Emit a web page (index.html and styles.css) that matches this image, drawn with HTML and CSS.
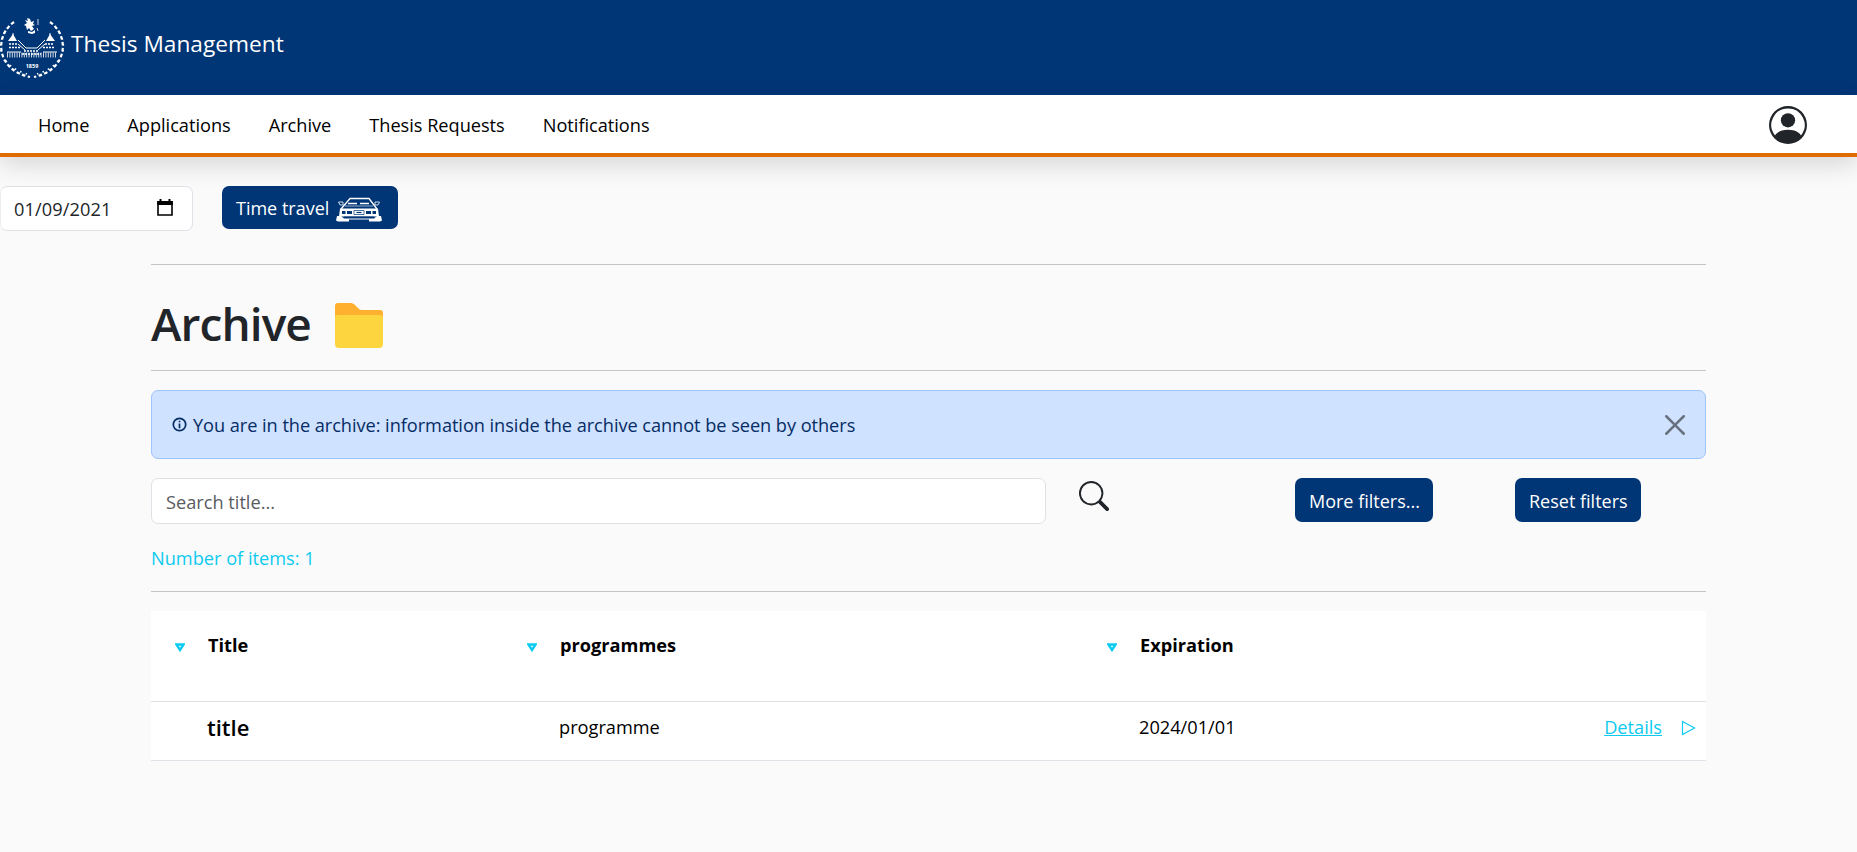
FILE: index.html
```html
<!DOCTYPE html>
<html lang="en">
<head>
<meta charset="utf-8">
<title>Thesis Management</title>
<link rel="stylesheet" href="styles.css">
</head>
<body>
<header class="brand">
  <svg class="logo" viewBox="0 0 66 66" fill="#fff" stroke="#fff">
    <g fill="none">
      <path d="M14 7C-6 21-4 55 30 62M50 7C70 21 68 55 34 62" stroke-width="2.200" stroke-dasharray="3.600 2.400"/>
      <path d="M11 10C-6 25-3 50 27 59M53 10C70 25 67 50 37 59" stroke-width="1.600" stroke-dasharray="1.600 4.400" stroke-dashoffset="2"/>
    </g>
    <path d="M25 5l3 1-1-3 3 1 1 3 3-1-1 3 2 1-3 1 2 3-3 2-2-3-2 2-1-4-2-1 3-2zM28 16l4 1 3-2v3l-3 1-4-1z" stroke="none"/>
    <path d="M38 4v6M37 13l1 3" stroke-width=".8"/>
    <path d="M13 18v3" stroke-width="1"/><path d="M50 18v3" stroke-width="1"/>
    <path d="M8 26l5-7 4 7zM46 26l4-7 5 7z" stroke="none"/>
    <path d="M18 25l8 8h11l8-8M18 29l7 6M45 29l-7 6" fill="none" stroke-width="1"/>
    <path d="M9 29h9M45 29h9M9 32.500h11M43 32.500h11M24 36h15M22 39h19" fill="none" stroke-width="1.400" stroke-dasharray="2 1"/>
    <path d="M7 40h50" stroke-width="5" stroke-dasharray="1 1.400" opacity=".8"/>
    <path d="M7 37h14M43 37h14" stroke-width="1"/>
    <text class="year" x="32" y="52.500" text-anchor="middle" stroke="none">1859</text>
  </svg>
  <span class="brand-name">Thesis Management</span>
</header>
<nav class="nav">
  <a>Home</a><a>Applications</a><a>Archive</a><a>Thesis Requests</a><a>Notifications</a>
  <svg class="avatar" viewBox="0 0 16 16" fill="#212529"><path d="M11 6a3 3 0 1 1-6 0 3 3 0 0 1 6 0"/><path fill-rule="evenodd" d="M0 8a8 8 0 1 1 16 0A8 8 0 0 1 0 8m8-7a7 7 0 0 0-5.468 11.37C3.242 11.226 4.805 10 8 10s4.757 1.225 5.468 2.37A7 7 0 0 0 8 1"/></svg>
</nav>
<div class="clock">
  <div class="date"><span>01/09/2021</span>
    <svg class="calendar" viewBox="0 0 16 17"><path d="M1 3h14v13H1z" fill="none" stroke="#000" stroke-width="1.6"/><path d="M.2 2h15.6v4H.2zM2.5 0h2v3h-2zM11.5 0h2v3h-2z"/></svg>
  </div>
  <button class="btn travel"><span>Time travel</span>
    <svg class="car" viewBox="0 0 46 26" fill="none" stroke="#fff"><path d="M5 12L14 1.500h19L41 12" stroke-width="1.300"/><path d="M12 6.500h22" stroke-width="1.600" stroke-dasharray="9 3"/><path d="M9 9h28" stroke-width=".6"/><path d="M2.500 5h4.500v3H4zM39 5h4.500L42 8h-3z" stroke-width=".8"/><path d="M4 11.500h38l1 8H3z" fill="#fff" stroke="none"/><path d="M6 15.500h3.500M11 15.500h5M30 15.500h5M36.500 15.500H40" stroke="#003576" stroke-width="3"/><path d="M18 13.500h10v4H18z" stroke="#003576" stroke-width=".7"/><path d="M20.500 15.500h5" stroke="#003576" stroke-width="1.200"/><path d="M1 19h4l3 2.500h30l3-2.500h4l1 4.500-2 1H33v-2H13v2H2l-2-1z" fill="#fff" stroke="none"/><path d="M8 19.800h30" stroke="#003576" stroke-width=".6"/></svg>
  </button>
</div>
<main class="content">
  <hr class="rule">
  <div class="heading"><h1>Archive</h1>
    <svg class="folder" viewBox="0 0 48 45"><path d="M3 0h13q2 0 3.500 1.500l4 4Q25 7 27 7h18q3 0 3 3v10H0V3q0-3 3-3z" fill="#ffb02e"/><path d="M3 12h42q3 0 3 3v26q0 4-4 4H4q-4 0-4-4V15q0-3 3-3z" fill="#fcd53f"/></svg>
  </div>
  <hr class="rule">
  <div class="alert">
    <svg class="info" viewBox="0 0 16 16" fill="none" stroke="#052c65"><circle cx="8" cy="8" r="6.600" stroke-width="1.800"/><path d="M8 7v5M8 4v1.700" stroke-width="1.800"/></svg>
    <span class="alert-text">You are in the archive: information inside the archive cannot be seen by others</span>
    <svg class="close" viewBox="0 0 16 16"><path d="M.293.293a1 1 0 0 1 1.414 0L8 6.586 14.293.293a1 1 0 1 1 1.414 1.414L9.414 8l6.293 6.293a1 1 0 0 1-1.414 1.414L8 9.414l-6.293 6.293a1 1 0 0 1-1.414-1.414L6.586 8 .293 1.707a1 1 0 0 1 0-1.414"/></svg>
  </div>
  <div class="filters">
    <div class="search">Search title...</div>
    <svg class="magnifier" viewBox="0 0 16 16" fill="#212529"><path d="M11.742 10.344a6.500 6.500 0 1 0-1.397 1.398h-.001q.044.060.098.115l3.850 3.850a1 1 0 0 0 1.415-1.414l-3.850-3.850a1 1 0 0 0-.115-.1zM12 6.500a5.500 5.500 0 1 1-11 0 5.500 5.500 0 0 1 11 0"/></svg>
    <button class="btn more">More filters...</button>
    <button class="btn reset">Reset filters</button>
  </div>
  <p class="count">Number of items: 1</p>
  <hr class="rule">
  <div class="table">
    <div class="row head">
      <div class="cell"><svg class="sort" viewBox="0 0 10 9"><path d="M1.500 1.500h7L5 7z"/></svg><span>Title</span></div>
      <div class="cell"><svg class="sort" viewBox="0 0 10 9"><path d="M1.500 1.500h7L5 7z"/></svg><span>programmes</span></div>
      <div class="cell"><svg class="sort" viewBox="0 0 10 9"><path d="M1.500 1.500h7L5 7z"/></svg><span>Expiration</span></div>
    </div>
    <div class="row body">
      <div class="cell title">title</div>
      <div class="cell prog">programme</div>
      <div class="cell exp">2024/01/01</div>
      <div class="cell action"><a class="details">Details</a><svg class="play" viewBox="0 0 15 16"><path d="M1.500 1.500L13.500 8l-12 6.500z"/></svg></div>
    </div>
  </div>
</main>
</body>
</html>
```
FILE: styles.css
```css
* { box-sizing: border-box; }
body {
  margin: 0;
  min-height: 852px;
  background: #fafafa;
  color: #212529;
  font: 18.2px/28.8px "Open Sans", "Noto Sans", sans-serif;
  white-space: nowrap;
}
svg { display: block; flex: none; }
.brand { display: flex; height: 95px; background: #003576; color: #fff; }
.logo { width: 66px; height: 66px; margin-top: 15px; }
.year { font: bold 5.500px "Open Sans", sans-serif; }
.brand-name { margin: 30px 0 0 5px; font-size: 22.7px; }
.nav {
  display: flex;
  height: 62px;
  padding: 16px 50px 0 38px;
  gap: 38px;
  background: #fff;
  color: #000;
  border-bottom: 4px solid #df6c00;
  box-shadow: 0 8px 24px rgba(0, 0, 0, .14);
  letter-spacing: -.02px;
}
.avatar { width: 38px; height: 38px; margin: -5px 0 0 auto; }
.clock { display: flex; height: 107px; padding-top: 29px; gap: 29px; }
.date {
  display: flex;
  justify-content: space-between;
  width: 193px;
  height: 45px;
  padding: 8px 19px 0 13px;
  background: #fff;
  border: 1px solid #dee2e6;
  border-left-color: #eceef0;
  border-radius: 7px;
}
.date span { letter-spacing: .1px; }
.calendar { width: 16px; height: 17px; margin-top: 4px; }
.btn {
  height: 44px;
  padding: 2px 14px 0;
  border: 0;
  border-radius: 7px;
  background: #003576;
  color: #fff;
  font: inherit;
  font-size: 18px;
  text-align: left;
}
.travel { display: flex; align-items: center; width: 176px; height: 43px; gap: 7px; }
.car { width: 46px; height: 26px; margin-top: 3px; }
.content { width: 1555px; margin-left: 151px; }
.rule { margin: 0; height: 1px; border: 0; background: #c4c5c6; }
.heading { display: flex; height: 105px; padding-top: 30px; }
h1 { margin: 0; width: 184px; font-size: 46px; line-height: 56px; font-weight: 600; letter-spacing: -.9px; }
.folder { width: 48px; height: 45px; margin-top: 8px; }
.alert {
  display: flex;
  align-items: center;
  height: 69px;
  margin: 19px 0;
  padding: 0 20px;
  background: #cfe2ff;
  border: 1px solid #9ec5fe;
  border-radius: 7px;
  color: #052c65;
}
.info { width: 15px; height: 15px; margin-right: 6px; }
.alert-text { padding-top: 1px; letter-spacing: -.05px; }
.close { width: 20px; height: 20px; margin-left: auto; fill: #000; opacity: .5; }
.filters { display: flex; height: 66px; }
.search {
  width: 895px;
  height: 46px;
  padding: 9px 14px;
  background: #fff;
  border: 1px solid #dee2e6;
  border-radius: 7px;
  color: #595c5f;
}
.magnifier { width: 30px; height: 30px; margin: 3px 186px 0 33px; }
.more { width: 138px; margin-right: 82px; }
.reset { width: 126px; }
.count { margin: 0; height: 47px; color: #0dcaf0; }
.table { margin-top: 19px; background: #fff; color: #000; }
.row { display: grid; grid-template-columns: 352px 580px 428px 1fr; border-bottom: 1px solid #dee2e6; }
.head { height: 91px; padding-top: 20px; font-weight: 700; }
.body { height: 59px; padding-top: 11px; }
.cell { display: flex; }
.head .cell { padding-left: 24px; }
.sort { width: 10px; height: 9px; margin: 12px 23px 0 0; fill: none; stroke: #0dcaf0; stroke-width: 2.4; }
.title { padding-left: 56px; font-size: 22px; font-weight: 600; }
.prog, .exp { padding-left: 56px; }
.action { justify-content: flex-end; padding-right: 10px; gap: 19px; color: #0dcaf0; }
.details { text-decoration: underline; }
.play { width: 15px; height: 16px; margin-top: 7px; fill: none; stroke: #0dcaf0; stroke-width: 1.2; }
```
